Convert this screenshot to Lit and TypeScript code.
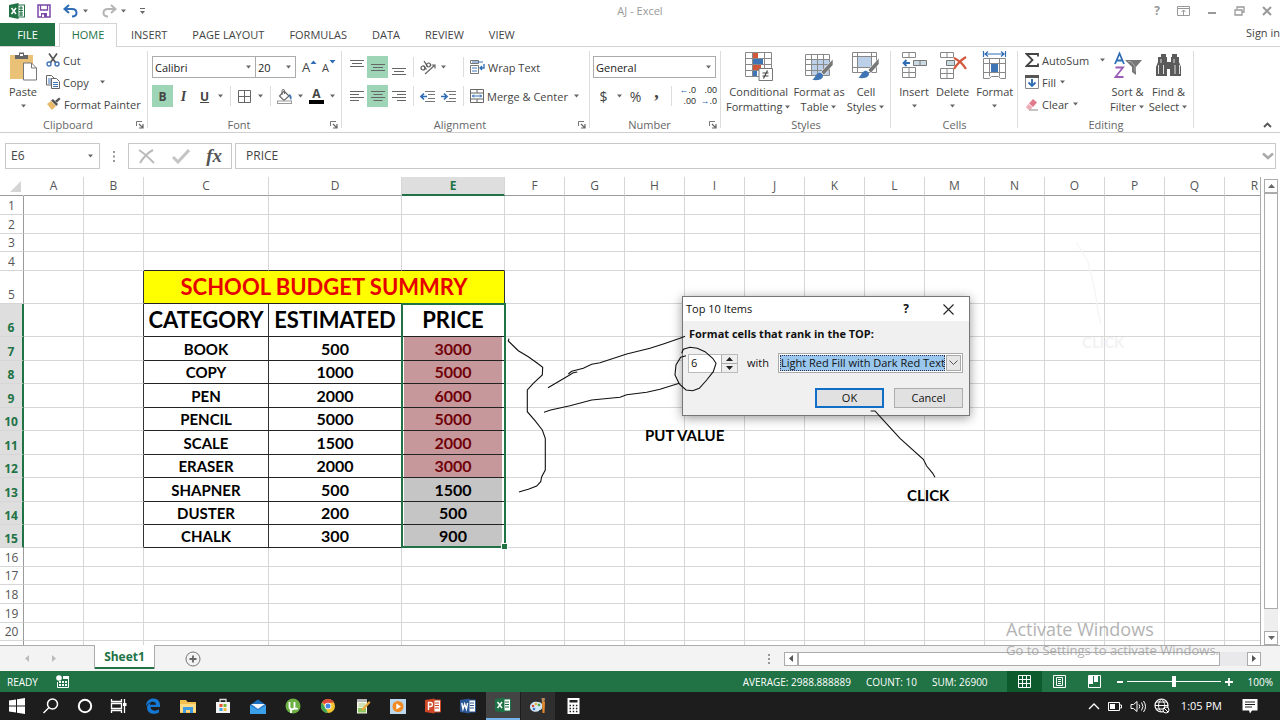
import { LitElement, html, css, nothing, TemplateResult } from "lit";
import { customElement } from "lit/decorators.js";
import { classMap } from "lit/directives/class-map.js";
import { styleMap } from "lit/directives/style-map.js";

const caret = html`<svg class="caret" width="7" height="4" viewBox="0 0 7 4" aria-hidden="true"><path d="M1 0.5h5L3.500 3.500z" fill="#666"/></svg>`;

/* ---------- title bar icons ---------- */
const excelLogo = html`<svg width="16" height="16" viewBox="0 0 16 16"><rect x="8" y="2" width="7.500" height="12" fill="#fff" stroke="#217346"/><path d="M10 5h4M10 7.500h4M10 10h4M10 12h4M12 3v10" stroke="#217346" stroke-width="1"/><path d="M0 2L9.500 0v16L0 14z" fill="#217346"/><path d="M2.500 5l4.500 6M7 5l-4.500 6" stroke="#fff" stroke-width="1.600"/></svg>`;
const saveIcon = html`<svg width="14" height="14" viewBox="0 0 14 14"><path d="M1 1h12v12H1z" fill="#fff" stroke="#7a48a8" stroke-width="1.500"/><path d="M3.500 1v5h7V1" fill="none" stroke="#7a48a8" stroke-width="1.300"/><path d="M4 13V9h6v4" fill="#7a48a8"/><rect x="5" y="10.500" width="2" height="2.500" fill="#fff"/></svg>`;
const undoIcon = html`<svg width="16" height="14" viewBox="0 0 16 14"><path d="M6 1L1.500 5L6 9M2 5h7c6 0 6 7.500 0 7.500" fill="none" stroke="#2f6db5" stroke-width="2"/></svg>`;
const redoIcon = html`<svg width="16" height="14" viewBox="0 0 16 14"><path d="M10 1l4.500 4L10 9M14 5H7c-6 0-6 7.500 0 7.500" fill="none" stroke="#b5b5b5" stroke-width="2"/></svg>`;
const customizeIcon = html`<svg width="7" height="7" viewBox="0 0 7 7"><path d="M1 0.500h5" stroke="#666"/><path d="M1 3h5L3.500 6z" fill="#666"/></svg>`;
const displayIcon = html`<svg width="13" height="10" viewBox="0 0 13 10"><path d="M0.500 0.500h12v9h-12zM0.500 2.500h12" fill="none" stroke="#999"/><path d="M6.500 9V4M4.500 6l2-2 2 2" fill="none" stroke="#999"/></svg>`;
const minIcon = html`<svg width="10" height="10" viewBox="0 0 10 10"><path d="M1 7h8" stroke="#999" stroke-width="2"/></svg>`;
const restoreIcon = html`<svg width="11" height="10" viewBox="0 0 11 10"><path d="M3 3V1h7v5H8M1 4h7v5H1z" fill="none" stroke="#999" stroke-width="1.300"/></svg>`;
const closeIcon = html`<svg width="10" height="10" viewBox="0 0 10 10"><path d="M1 1l8 8M9 1L1 9" stroke="#999" stroke-width="2"/></svg>`;

/* ---------- ribbon icons ---------- */
const pasteIcon = html`<svg width="30" height="30" viewBox="0 0 30 30"><rect x="2" y="4" width="23" height="24" fill="#e9c277"/><path d="M7 8V4h4V1.500h5V4h4v4z" fill="#666"/><rect x="12" y="3" width="3" height="2" fill="#fff"/><path d="M15.500 12h8l5 5v12h-13z" fill="#fff" stroke="#777"/><path d="M23.500 12v5h5" fill="none" stroke="#777"/></svg>`;
const cutIcon = html`<svg width="14" height="14" viewBox="0 0 14 14"><path d="M3 0.500L9.500 9.500M11 0.500L4.500 9.500" stroke="#555" stroke-width="1.700"/><circle cx="3" cy="11" r="2" fill="#fff" stroke="#3f74b5" stroke-width="1.400"/><circle cx="11" cy="11" r="2" fill="#fff" stroke="#3f74b5" stroke-width="1.400"/></svg>`;
const copyIcon = html`<svg width="14" height="14" viewBox="0 0 14 14"><path d="M.500.500h5l2.500 2.500v7h-7.500z" fill="#fff" stroke="#666"/><path d="M2 4h4M2 6h4M2 8h4" stroke="#3f74b5"/><path d="M5.500 3.500h5l3 3v7h-8z" fill="#fff" stroke="#666"/><path d="M7 7.500h5M7 9.500h5M7 11.500h5" stroke="#3f74b5"/></svg>`;
const painterIcon = html`<svg width="15" height="14" viewBox="0 0 15 14"><path d="M1 7l4-3 5 5-4 4z" fill="#e9b96a"/><path d="M5 3.500l2-1.500 5 5-1.500 2z" fill="#555"/><path d="M9 4l4-3.500 1.500 1.500L11 5.500z" fill="#555"/></svg>`;
const growIcon = html`<svg width="7" height="4" viewBox="0 0 7 4"><path d="M0.500 4L3.500 0.500l3 3.500z" fill="#2f6db5"/></svg>`;
const shrinkIcon = html`<svg width="7" height="4" viewBox="0 0 7 4"><path d="M0.500 0L3.500 3.500l3-3.500z" fill="#2f6db5"/></svg>`;
const borderIcon = html`<svg width="13" height="13" viewBox="0 0 13 13"><path d="M.500.500h12v12H.500zM6.500.500v12M.500 6.500h12" fill="none" stroke="#666"/></svg>`;
const fillColorIcon = html`<svg width="16" height="15" viewBox="0 0 16 15"><path d="M7 2l5 5-5 4.500L2.500 7z" fill="#fff" stroke="#666" stroke-width="1.200"/><path d="M5 6V1.500c0-1.500 2.500-1.500 2.500 0V5" fill="none" stroke="#666"/><path d="M12 5c3 1 3 4 2 6-1-1-2-3-2-6z" fill="#3f74b5"/><rect x="0.500" y="12" width="14" height="2.500" fill="#fff" stroke="#999"/></svg>`;
const launcher = html`<svg width="8" height="8" viewBox="0 0 8 8"><path d="M0.500 5V.500H6" fill="none" stroke="#777"/><path d="M3 3l3.500 3.500M7 3v4H3" fill="none" stroke="#666" stroke-width="1.200"/></svg>`;
const lines = (ws: number[], align: string, top: number) => html`<svg width="14" height="15" viewBox="0 0 14 15"><path d=${ws.map((w, i) => `M${align === "l" ? 0 : align === "r" ? 14 - w : (14 - w) / 2} ${top + i * 3 + 0.5}h${w}`).join("")} stroke="#666"/></svg>`;
const orientIcon = html`<svg width="16" height="15" viewBox="0 0 16 15"><path d="M5 14L15 5M11.500 5H15V8.500" fill="none" stroke="#666" stroke-width="1.200"/><g fill="none" stroke="#555" stroke-width="1.200"><circle cx="3" cy="8" r="2"/><path d="M3.500 5.500L6.500 9.500"/><circle cx="8.500" cy="5" r="2"/><path d="M4 1L7.500 6.500"/></g></svg>`;
const outdentIcon = html`<svg width="15" height="11" viewBox="0 0 15 11"><path d="M5 .500h10M8 3.500h7M8 7.500h7M5 10.500h10" stroke="#777"/><path d="M7 5.500H1M4 2.500l-3 3 3 3" fill="none" stroke="#2f6db5" stroke-width="1.700"/></svg>`;
const indentIcon = html`<svg width="15" height="11" viewBox="0 0 15 11"><path d="M5 .500h10M8 3.500h7M8 7.500h7M5 10.500h10" stroke="#777"/><path d="M0 5.500h6M3 2.500l3 3-3 3" fill="none" stroke="#2f6db5" stroke-width="1.700"/></svg>`;
const wrapIcon = html`<svg width="15" height="14" viewBox="0 0 15 14"><path d="M.500.500h8v3h-8zM.500 5.500h8v8h-8z" fill="#fff" stroke="#777"/><path d="M2 2h11M2 8h5M2 11h5" stroke="#3f74b5"/><path d="M14 4v4h-4M12 6l-2 2 2 2" fill="none" stroke="#2f6db5" stroke-width="1.300"/></svg>`;
const mergeIcon = html`<svg width="14" height="14" viewBox="0 0 14 14"><path d="M.500.500h13v13H.500zM.500 4h13M.500 10h13M7 .500V4M7 10v3.500" fill="none" stroke="#666"/><path d="M2 7h10M4 5.500L2.500 7 4 8.500M10 5.500L11.500 7 10 8.500" fill="none" stroke="#2f6db5"/></svg>`;
const condIcon = html`<svg width="30" height="30" viewBox="0 0 30 30"><path d="M1.500 1.500h26v24h-26z" fill="#fff"/><path d="M9 2h5v5H9zM9 14h8v5H9z" fill="#d2573a"/><path d="M9 8h10v5H9zM9 19h4v6H9z" fill="#3f74b5"/><path d="M1.500 1.500h26v24h-26zM1.500 7.500h26M1.500 13.500h26M1.500 19.500h26M8.500 1.500v24M20.500 1.500v24" fill="none" stroke="#888"/><path d="M15 17.500h13.500v12H15z" fill="#fff" stroke="#777"/><path d="M18.500 22h6M18.500 25h6M23.500 19.500l-4 8" stroke="#444" stroke-width="1.200"/></svg>`;
const tableIcon = html`<svg width="30" height="30" viewBox="0 0 30 30"><path d="M1.500 3.500h24v21h-24z" fill="#fff"/><path d="M8 9h17v15H8z" fill="#bdd0ea"/><path d="M1.500 3.500h24v21h-24zM1.500 8.500h24M1.500 13.500h24M1.500 19.500h24M7.500 3.500v21M13.500 3.500v21M19.500 3.500v21" fill="none" stroke="#888"/><path d="M29 8v6l-9 10-3-3z" fill="#777" stroke="#fff" stroke-width=".6"/><path d="M8 28.500c3-.5 3-5 6.500-6.500 2-.7 4.500 1 4.500 3 0 4-7 5-11 3.500z" fill="#3f74b5"/></svg>`;
const cellIcon = html`<svg width="30" height="30" viewBox="0 0 30 30"><path d="M1.500 1.500h24v20h-24z" fill="#fff"/><path d="M7 6h13v10H7z" fill="#bdd0ea"/><path d="M1.500 1.500h24v20h-24zM1.500 5.500h24M1.500 16.500h24M6.500 1.500v20M20.500 1.500v20" fill="none" stroke="#888"/><path d="M28 7v6l-8 9-3-3z" fill="#777" stroke="#fff" stroke-width=".6"/><path d="M7 26.500c3-.5 3-5 6.500-6.500 2-.7 4.500 1 4.500 3 0 4-7 5-11 3.500z" fill="#3f74b5"/></svg>`;
const insertIcon = html`<svg width="30" height="30" viewBox="0 0 30 30"><path d="M3.500 1.500h13v5h-13zM10 1.500v5M3.500 16.500h13v10h-13zM10 16.500v10M3.500 21.500h13" fill="#fff" stroke="#888"/><path d="M14.500 9.500h13v5h-13zM21 9.500v5" fill="#c7dbe0" stroke="#777"/><path d="M11 12H4.500M7.500 9L4.500 12l3 3" fill="none" stroke="#2f6db5" stroke-width="1.800"/></svg>`;
const deleteIcon = html`<svg width="30" height="30" viewBox="0 0 30 30"><path d="M2.500 1.500h13v5h-13zM9 1.500v5M2.500 17.500h13v10h-13zM9 17.500v10M2.500 22.500h13" fill="#fff" stroke="#888"/><path d="M8.500 9.500h8v5h-8z" fill="#c7dbe0" stroke="#777"/><path d="M16 7c4 2 9 6 12 11M28 6c-5 3-9 7-12 12" fill="none" stroke="#d2573a" stroke-width="2.200"/></svg>`;
const formatIcon = html`<svg width="30" height="30" viewBox="0 0 30 30"><path d="M3.500 7.500h22v20h-5l-2-2h-7l-2 2h-6zM3.500 12.500h22M3.500 21.500h22M9.500 7.500v18M19.500 7.500v18" fill="#fff" stroke="#888"/><rect x="11" y="13" width="7" height="8" fill="#3f74b5"/><path d="M3.500 0v6M25.500 0v6M5 3h19M8 0.500L5 3l3 2.500M21 .500L24 3l-3 2.500" fill="none" stroke="#2f6db5" stroke-width="1.200"/></svg>`;
const sumIcon = html`<svg width="14" height="14" viewBox="0 0 14 14"><path d="M13 3.500V1H1.500L7.500 7l-6 6H13v-2.500" fill="none" stroke="#444" stroke-width="1.800"/></svg>`;
const fillIcon = html`<svg width="14" height="14" viewBox="0 0 14 14"><path d="M.500.500h13v13H.500z" fill="#fff" stroke="#888"/><path d="M0 0h14v3H0z" fill="#555"/><path d="M7 4v7M3.500 7.500L7 11l3.500-3.500" fill="none" stroke="#2f6db5" stroke-width="1.900"/></svg>`;
const clearIcon = html`<svg width="14" height="13" viewBox="0 0 14 13"><path d="M8 1l4 3.500L8 9 4 5.500z" fill="#e27a8d"/><path d="M3.500 6L7.500 9.500l-2 2H3L1 9z" fill="#f0aab6"/><path d="M4 12h9" stroke="#888"/></svg>`;
const sortIcon = html`<svg width="30" height="30" viewBox="0 0 30 30"><path d="M2 13L6.500 2.500 11 13M3.500 9.500h6" fill="none" stroke="#2f6db5" stroke-width="1.800"/><path d="M2.500 16.500h7.500l-7.500 9.500h8" fill="none" stroke="#9a5bb5" stroke-width="1.800"/><path d="M12 9h17l-6 7v8l-4-3v-5z" fill="#777"/><path d="M15 10.500h3l4 5v5" fill="none" stroke="#aaa"/></svg>`;
const findIcon = html`<svg width="30" height="30" viewBox="0 0 30 30"><path d="M7 3h5v3h1v5h4V6h1V3h5v3h2v5l2 5v9H16v-7h-3v7H2v-9l2-5V6h3z" fill="#5a5a5a"/><path d="M4.500 14v9M7 8v4M20 8v4M25.500 14v9M9.500 14v9M21 14v9" stroke="#ddd"/></svg>`;
const collapseIcon = html`<svg width="9" height="6" viewBox="0 0 9 6"><path d="M1 5l3.500-3.500L8 5" fill="none" stroke="#555" stroke-width="1.800"/></svg>`;

/* ---------- task bar icons ---------- */
const startIcon = html`<svg width="18" height="18" viewBox="0 0 18 18"><path d="M1 3.500l7-1v6H1zM9 2.300L17 1v7.500H9zM1 9.500h7v6l-7-1zM9 9.500h8V17l-8-1.300z" fill="#fff"/></svg>`;
const searchIcon = html`<svg width="18" height="18" viewBox="0 0 18 18"><circle cx="10.500" cy="7" r="5" fill="none" stroke="#fff" stroke-width="1.500"/><path d="M7 10.500L1.500 16" stroke="#fff" stroke-width="1.500"/></svg>`;
const cortanaIcon = html`<svg width="16" height="16" viewBox="0 0 16 16"><circle cx="8" cy="8" r="6.200" fill="none" stroke="#fff" stroke-width="2"/></svg>`;
const taskViewIcon = html`<svg width="18" height="16" viewBox="0 0 18 16"><path d="M1.500 1v2.500h10V1M1.500 15v-2.500h10V15M1.500 5.500h10v5h-10zM14.500 1v14" fill="none" stroke="#fff" stroke-width="1.300"/><rect x="13" y="5" width="3.500" height="3" fill="#fff"/></svg>`;
const edgeIcon = html`<svg width="16" height="16" viewBox="0 0 16 16"><path d="M1 8C1 3 4.500.5 8.500.5c4.500 0 6.500 3 6.500 6.500v2H5.500c.3 4 5.500 4.500 8.500 2.500v3C9.500 17 2 16 2 9.500 2 7 4 5 6 4.500c-1 1-1.200 2-1.200 2.300H11c0-4-6-4.300-10 1.200z" fill="#1478d4"/></svg>`;
const explorerIcon = html`<svg width="16" height="15" viewBox="0 0 16 15"><path d="M0 1h6l1.500 2H16v11H0z" fill="#f3c04f"/><path d="M0 5h16v8H0z" fill="#fbdc85"/><path d="M3 8h10v6h-3v-3H6v3H3z" fill="#3f9be0"/></svg>`;
const storeIcon = html`<svg width="16" height="16" viewBox="0 0 16 16"><path d="M5 4V1.500h6V4" fill="none" stroke="#ddd" stroke-width="1.300"/><path d="M1 4h14v11H1z" fill="#f3f3f3"/><path d="M4.500 6h3v3h-3z" fill="#e8502c"/><path d="M8.500 6h3v3h-3z" fill="#7eb63a"/><path d="M4.500 10h3v3h-3z" fill="#3aa3e0"/><path d="M8.500 10h3v3h-3z" fill="#f3b93a"/></svg>`;
const mailIcon = html`<svg width="16" height="15" viewBox="0 0 16 15"><path d="M0 6l8-5.500L16 6v9H0z" fill="#1a6fc0"/><path d="M1 5h14l-7 5z" fill="#f1f6fa"/><path d="M0 6l8 5 8-5v9H0z" fill="#3aa0ea"/></svg>`;
const torrentIcon = html`<svg width="16" height="16" viewBox="0 0 16 16"><circle cx="8" cy="8" r="7.500" fill="#6cb044"/><path d="M4.500 4v5c0 3 4.500 3 5 .5V4M9.500 9.500c.5 2 2.500 1.500 3 .5M6 11v4" fill="none" stroke="#fff" stroke-width="1.800"/></svg>`;
const chromeIcon = html`<svg width="16" height="16" viewBox="0 0 16 16"><circle cx="8" cy="8" r="7" fill="#f5c531"/><path d="M8 8L1.900 4.500A7 7 0 0 1 14.100 4.500L8 5z" fill="#df4a3c"/><path d="M1.900 4.500L5.500 10 8 15A7 7 0 0 1 1.900 4.500z" fill="#3fa557"/><circle cx="8" cy="8" r="3.300" fill="#fff"/><circle cx="8" cy="8" r="2.500" fill="#4a86e0"/></svg>`;
const noteIcon = html`<svg width="16" height="16" viewBox="0 0 16 16"><path d="M2 2.500h10v13H2z" fill="#f4f6e8"/><path d="M2 1h10v3H2z" fill="#b7b7b7"/><path d="M3.500 6h7M3.500 8h7" stroke="#a9c98a"/><path d="M3 10h8v4.500H3z" fill="#8cc663"/><path d="M6 11.500l8-8.500 1.500 1.500L8 13z" fill="#e8a93a"/></svg>`;
const playerIcon = html`<svg width="16" height="15" viewBox="0 0 16 15"><path d="M0 0h16v15H0z" fill="#bcd8ef"/><circle cx="8" cy="7.500" r="5.500" fill="#f08a24"/><path d="M6.300 4.500v6l4.700-3z" fill="#fff"/></svg>`;
const office = (fill: string, glyph: string) => html`<svg width="16" height="16" viewBox="0 0 16 16"><path d="M8 2h7.500v12H8z" fill="#fff" stroke=${fill}/><path d="M10 5h4M10 7.500h4M10 10h4" stroke=${fill}/><path d="M0 2L9.500.500v15L0 14z" fill=${fill}/><path d=${glyph} fill="none" stroke="#fff" stroke-width="1.400"/></svg>`;
const paintIcon = html`<svg width="18" height="16" viewBox="0 0 18 16"><path d="M1 9c0-4 4-6 8-5 4 0 5 3 4 6s-3 1-3 3c-4 2-9 0-9-4z" fill="#cfe6f5"/><circle cx="4" cy="8" r="1.300" fill="#dc4c3c"/><circle cx="7" cy="6" r="1.300" fill="#f0b32f"/><circle cx="10" cy="7" r="1.300" fill="#56a44a"/><circle cx="5" cy="11" r="1.300" fill="#3c74c8"/><path d="M13 4h3l-.5 11h-2z" fill="#e2892c"/><path d="M12.500 0h3.500l-.5 4h-2.500z" fill="#b88a5c"/></svg>`;
const calcIcon = html`<svg width="13" height="16" viewBox="0 0 13 16"><path d="M.500 0h12v16H.500z" fill="#fff"/><path d="M2.500 2h8v2.500h-8z" fill="#222"/><path d="M2.500 7.500h8M2.500 10.500h8M2.500 13.500h8" stroke="#222" stroke-width="1.500" stroke-dasharray="1.500 1.700"/></svg>`;

interface App { name: string; icon: TemplateResult; state?: string; sys?: boolean }
const APPS: App[] = [
  { name: "Start", icon: startIcon, sys: true },
  { name: "Search", icon: searchIcon, sys: true },
  { name: "Cortana", icon: cortanaIcon, sys: true },
  { name: "Task view", icon: taskViewIcon, sys: true },
  { name: "Edge", icon: edgeIcon },
  { name: "Files", icon: explorerIcon },
  { name: "Store", icon: storeIcon },
  { name: "Mail", icon: mailIcon },
  { name: "Torrent", icon: torrentIcon },
  { name: "Chrome", icon: chromeIcon },
  { name: "Notes", icon: noteIcon },
  { name: "Player", icon: playerIcon },
  { name: "PowerPoint", icon: office("#d04727", "M3.500 12V4.500h2c2.500 0 2.500 4 0 4h-2") },
  { name: "Word", icon: office("#2b5797", "M1.800 5l1.200 6 1.700-5 1.700 5 1.200-6") },
  { name: "Excel", icon: office("#1e7145", "M2.500 5l4.500 6M7 5l-4.500 6"), state: "active" },
  { name: "Paint", icon: paintIcon, state: "open" },
  { name: "Calculator", icon: calcIcon },
];

const COLS: [string, number][] = [
  ["A", 60], ["B", 60], ["C", 125], ["D", 133], ["E", 103],
  ..."FGHIJKLMNOPQR".split("").map((c) => [c, 60] as [string, number]),
];
const HEAD_WIDTH = 24;
const TABLE_WIDTH = COLS.reduce((sum, [, w]) => sum + w, HEAD_WIDTH);
const HEIGHTS = [19, 19, 18, 19, 33, 33, 24, 23, 24, 23, 24, 23, 24, 23, 23, 19, 18, 19, 19, 18, 19];
const RECORDS: [string, number, number][] = [
  ["BOOK", 500, 3000], ["COPY", 1000, 5000], ["PEN", 2000, 6000],
  ["PENCIL", 5000, 5000], ["SCALE", 1500, 2000], ["ERASER", 2000, 3000],
  ["SHAPNER", 500, 1500], ["DUSTER", 200, 500], ["CHALK", 300, 900],
];
const TOP_COUNT = 6;

@customElement("sheet-grid")
class SheetGrid extends LitElement {
  static styles = css`
    :host { display: block; }
    table { table-layout: fixed; border-collapse: separate; border-spacing: 0; }
    th, td { box-sizing: border-box; padding: 0; border: 0 solid #d6d6d6; border-width: 0 1px 1px 0; overflow: hidden; white-space: nowrap; text-align: center; line-height: 16px; }
    th { font: 12px/16px "Open Sans", "Noto Sans", sans-serif; color: #555; }
    thead th { height: 19px; border-bottom-color: #9b9b9b; }
    thead th.picked { background: #dedede; color: #217346; font-weight: 700; border-bottom: 2px solid #217346; }
    .corner { vertical-align: bottom; border-right-color: transparent; }
    .corner svg { display: block; margin: 0 2px 3px 10px; }
    tbody th { border-right-color: #9b9b9b; vertical-align: bottom; }
    tbody th.picked { background: #dedede; color: #217346; font-weight: 700; border-right: 2px solid #217346; }
    td { font: 700 16px/20px Lato, "Open Sans", sans-serif; color: #000; vertical-align: middle; }
    .right { border-right-color: #333; }
    .below { border-bottom-color: #222; }
    .name { font-size: 15px; }
    .title { background: #ff0; color: #e60000; font-size: 22px; line-height: 30px; }
    .head { font-size: 22px; line-height: 30px; }
    .price { background: #c5c5c5; box-shadow: inset 2px 0 #fff, inset -2px 0 #fff; }
    .price.top { background: #c6989c; color: #700008; }
  `;

  private cell(row: number, col: number) {
    if (row === 5 && col === 2) return html`<td class="title right below" colspan="3">SCHOOL BUDGET SUMMRY</td>`;
    if (row === 5 && (col === 3 || col === 4)) return nothing;
    const inside = col >= 2 && col <= 4;
    const classes = {
      right: row >= 5 && row <= 15 && col >= 1 && col <= 4,
      below: inside && row >= 4 && row <= 15,
      head: inside && row === 6,
      name: col === 2 && row > 6,
      price: col === 4 && row > 6 && row <= 15,
      top: col === 4 && row > 6 && row <= 6 + TOP_COUNT,
    };
    let text: string | number | typeof nothing = nothing;
    if (inside && row === 6) text = ["CATEGORY", "ESTIMATED", "PRICE"][col - 2];
    if (inside && row > 6 && row <= 15) text = RECORDS[row - 7][col - 2];
    return html`<td class=${classMap(classes)}>${text}</td>`;
  }

  render() {
    return html`<table style=${styleMap({ width: TABLE_WIDTH + "px" })}>
      <colgroup><col style=${styleMap({ width: HEAD_WIDTH + "px" })}>${COLS.map(([, w]) => html`<col style=${styleMap({ width: w + "px" })}>`)}</colgroup>
      <thead><tr>
        <th class="corner"><svg width="11" height="11" viewBox="0 0 11 11"><path d="M11 0v11H0z" fill="#d5d5d5"/></svg></th>
        ${COLS.map(([name]) => html`<th scope="col" class=${classMap({ picked: name === "E" })}>${name}</th>`)}
      </tr></thead>
      <tbody>${HEIGHTS.map((h, i) => html`<tr style=${styleMap({ height: h + "px" })}>
        <th scope="row" class=${classMap({ picked: i >= 5 && i <= 14 })}>${i < 20 ? i + 1 : nothing}</th>
        ${COLS.map((_, c) => this.cell(i + 1, c))}
      </tr>`)}</tbody>
    </table>`;
  }
}

@customElement("top-dialog")
class TopDialog extends LitElement {
  static styles = css`
    :host { display: block; box-sizing: border-box; width: 288px; background: #f0f0f0; border: 1px solid #777; box-shadow: 0 2px 10px rgba(0,0,0,.4); font: 11px/16px "Open Sans", "Noto Sans", sans-serif; color: #111; }
    button, input, select { font: inherit; color: inherit; margin: 0; padding: 0; border-radius: 0; box-sizing: border-box; }
    header { display: flex; align-items: center; background: #fff; height: 24px; padding-left: 3px; }
    header span { flex: 1; }
    header button { border: 0; background: none; width: 42px; height: 24px; display: grid; place-items: center; font-weight: 700; font-size: 12px; }
    .body { padding: 5px 6px 7px 5px; }
    .prompt { display: block; font-weight: 700; padding: 0 0 11px 1px; }
    .row { display: flex; align-items: center; height: 20px; }
    .spin { display: flex; flex: none; width: 50px; height: 19px; border: 1px solid #bbb; box-sizing: border-box; background: #fff; }
    .spin input { flex: 1; min-width: 0; border: 0; padding-left: 2px; background: none; }
    .arrows { display: grid; width: 15px; background: #eee; border-left: 1px solid #aaa; }
    .arrows button { border: 0; background: none; display: grid; place-items: center; }
    .arrows button + button { border-top: 1px solid #aaa; }
    .with { flex: none; width: 40px; text-align: center; }
    .pick { flex: 1; min-width: 0; position: relative; display: flex; height: 20px; box-sizing: border-box; border: 1px solid #aaa; padding: 1px; background: #fff; }
    .pick select { appearance: none; flex: 1; min-width: 0; border: 1px dotted #335; background: #99c7ee; margin-right: 16px; line-height: 14px; }
    .pick i { position: absolute; right: 1px; top: 1px; bottom: 1px; width: 15px; display: grid; place-items: center; background: #e6e6e6; border: 1px solid #aaa; box-sizing: border-box; pointer-events: none; }
    .actions { display: flex; justify-content: flex-end; gap: 10px; padding-top: 15px; }
    .actions button { width: 69px; height: 20px; background: #e1e1e1; border: 1px solid #adadad; line-height: 16px; }
    .actions .default { border: 2px solid #0f6fc6; }
  `;
  render() {
    return html`
      <header><span>Top 10 Items</span><button>?</button><button aria-label="Close"><svg width="11" height="11" viewBox="0 0 11 11"><path d="M.500.500l10 10M10.500.500l-10 10" stroke="#222" stroke-width="1.100"/></svg></button></header>
      <div class="body">
        <label class="prompt" for="rank">Format cells that rank in the TOP:</label>
        <div class="row">
          <div class="spin"><input id="rank" .value=${String(TOP_COUNT)}>
            <div class="arrows">
              <button aria-label="More"><svg width="7" height="4" viewBox="0 0 7 4"><path d="M0 4L3.500 0 7 4z" fill="#222"/></svg></button>
              <button aria-label="Less"><svg width="7" height="4" viewBox="0 0 7 4"><path d="M0 0L3.500 4 7 0z" fill="#222"/></svg></button>
            </div>
          </div>
          <label class="with" for="style">with</label>
          <div class="pick"><select id="style"><option>Light Red Fill with Dark Red Text</option></select><i><svg width="9" height="6" viewBox="0 0 9 6"><path d="M.500.500l4 4 4-4" fill="none" stroke="#555"/></svg></i></div>
        </div>
        <div class="actions"><button class="default">OK</button><button>Cancel</button></div>
      </div>`;
  }
}

@customElement("excel-ribbon")
class ExcelRibbon extends LitElement {
  static styles = css`
    :host { display: flex; height: 86px; box-sizing: border-box; border-bottom: 1px solid #cfcfcf; font: 11px/15px "Open Sans", "Noto Sans", sans-serif; color: #444; background: #fff; }
    button, select { font: inherit; color: inherit; margin: 0; padding: 0; border: 0; background: none; border-radius: 0; box-sizing: border-box; }
    svg { flex: none; display: block; }
    .group { display: flex; flex-direction: column; flex: none; position: relative; box-sizing: border-box; padding: 2px 0 0; }
    .group::after { content: ""; position: absolute; right: 0; top: 4px; bottom: 4px; width: 1px; background: #dcdcdc; }
    .clipboard { width: 148px; }
    .font { width: 194px; }
    .alignment { width: 248px; }
    .number { width: 131px; }
    .styles { width: 170px; }
    .cells { width: 127px; }
    .editing { width: 176px; }
    .body { display: flex; height: 68px; }
    .caption { display: flex; align-items: center; height: 15px; color: #666; padding: 0 4px 0 0; }
    .caption span { flex: 1; text-align: center; }
    .caption.plain { padding: 0; }
    .clipboard .body { padding-left: 8px; gap: 8px; }
    .big { display: flex; flex-direction: column; align-items: center; padding-top: 2px; text-align: center; white-space: nowrap; line-height: 15px; }
    .big svg:first-child { margin-bottom: 3px; }
    .big .caret { margin-top: 5px; }
    .big .line { display: flex; align-items: center; gap: 2px; }
    .big .line .caret { margin: 0; }
    .stack { display: flex; flex-direction: column; }
    .small { display: flex; align-items: center; gap: 3px; height: 22px; white-space: nowrap; }
    .small .far { margin-left: 7px; display: block; }
    .rows { display: flex; flex-direction: column; gap: 7px; padding-top: 7px; flex: 1; box-sizing: border-box; }
    .rows > div { display: flex; align-items: center; height: 22px; }
    .combo { position: relative; display: flex; align-items: center; height: 22px; box-sizing: border-box; border: 1px solid #ababab; }
    .combo + .combo { border-left: 0; }
    .combo select { appearance: none; width: 100%; height: 20px; padding: 0 2px; color: #222; }
    .combo .caret { position: absolute; right: 3px; top: 8px; }
    .w-font { width: 104px; }
    .w-size { width: 40px; }
    .w-number { width: 123px; }
    .tool { width: 21px; height: 22px; display: grid; place-items: center; flex: none; }
    .on { background: #9fd5b7; }
    .drop { width: 11px; height: 22px; display: grid; place-items: center; flex: none; }
    .bar { width: 1px; height: 20px; margin: 0 3px 0 4px; background: #dcdcdc; flex: none; }
    .gap { width: 10px; flex: none; }
    .b { font-weight: 700; font-size: 12px; }
    .i { font-family: "Liberation Serif", serif; font-style: italic; font-weight: 700; font-size: 14px; }
    .u { font-weight: 700; text-decoration: underline; font-size: 12px; }
    .comma { font: 700 18px/12px "Liberation Serif", serif; padding-bottom: 8px; }
    .font .body, .alignment .body { padding-left: 4px; }
    .number .body { padding-left: 3px; }
    .sizer { display: flex; align-items: flex-start; width: 20px; font-size: 13px; }
    .sizer.less { font-size: 11px; }
    .sizers { display: flex; padding-left: 6px; }
    .ink { display: flex; flex-direction: column; align-items: center; width: 15px; font-weight: 700; font-size: 12px; line-height: 12px; border-bottom: 4px solid #000; }
    .label { display: flex; align-items: center; gap: 3px; height: 22px; padding: 0 3px; white-space: nowrap; }
    .sym { font-size: 14px; }
    .dec { display: grid; font: 9px/11px "Liberation Sans", sans-serif; text-align: right; width: 21px; color: #333; }
    .dec em { font-style: normal; color: #2f6db5; }
    .styles .body { padding-left: 5px; gap: 2px; }
    .cells .body { padding-left: 8px; gap: 7px; }
    .editing .body { padding-left: 7px; }
    .editing .stack { width: 82px; }
    .editing .big { width: 41px; }
    .end { flex: 1; display: flex; justify-content: flex-end; align-items: flex-end; padding: 0 8px 4px; }
  `;
  private drop = html`<button class="drop" aria-label="More">${caret}</button>`;
  private caption(name: string, launch = true) {
    return html`<div class="caption ${launch ? "" : "plain"}"><span>${name}</span>${launch ? html`<button aria-label="${name} settings">${launcher}</button>` : nothing}</div>`;
  }
  private big(icon: TemplateResult, a: string, b?: string) {
    return html`<button class="big">${icon}<span>${a}</span>${b ? html`<span class="line">${b} ${caret}</span>` : caret}</button>`;
  }
  private combo(name: string, value: string, cls: string) {
    return html`<div class="combo ${cls}"><select aria-label=${name}><option>${value}</option></select>${caret}</div>`;
  }
  render() {
    return html`
      <section class="group clipboard"><div class="body">
        ${this.big(pasteIcon, "Paste")}
        <div class="stack">
          <button class="small">${cutIcon}Cut</button>
          <button class="small">${copyIcon}Copy <span class="far">${caret}</span></button>
          <button class="small">${painterIcon}Format Painter</button>
        </div></div>${this.caption("Clipboard")}</section>

      <section class="group font"><div class="body"><div class="rows">
        <div>${this.combo("Font", "Calibri", "w-font")}${this.combo("Font size", "20", "w-size")}
          <span class="sizers"><button class="sizer">A${growIcon}</button><button class="sizer less">A${shrinkIcon}</button></span></div>
        <div><button class="tool on b">B</button><button class="tool i">I</button><button class="tool u">U</button>${this.drop}<span class="bar"></span>
          <button class="tool">${borderIcon}</button>${this.drop}<span class="bar"></span>
          <button class="tool">${fillColorIcon}</button>${this.drop}<button class="tool"><span class="ink">A</span></button>${this.drop}</div>
      </div></div>${this.caption("Font")}</section>

      <section class="group alignment"><div class="body"><div class="rows">
        <div><button class="tool">${lines([14, 10, 14], "c", 0)}</button><button class="tool on">${lines([14, 10, 14], "c", 4)}</button><button class="tool">${lines([14, 10, 14], "c", 8)}</button>
          <span class="bar"></span><button class="tool">${orientIcon}</button>${this.drop}<span class="gap"></span><span class="bar"></span>
          <button class="label">${wrapIcon}Wrap Text</button></div>
        <div><button class="tool">${lines([14, 9, 14, 9], "l", 2)}</button><button class="tool on">${lines([14, 9, 14, 9], "c", 2)}</button><button class="tool">${lines([14, 9, 14, 9], "r", 2)}</button>
          <span class="bar"></span><button class="tool">${outdentIcon}</button><button class="tool">${indentIcon}</button><span class="bar"></span>
          <button class="label">${mergeIcon}Merge &amp; Center</button>${this.drop}</div>
      </div></div>${this.caption("Alignment")}</section>

      <section class="group number"><div class="body"><div class="rows">
        <div>${this.combo("Number format", "General", "w-number")}</div>
        <div><button class="tool sym">$</button>${this.drop}<button class="tool sym">%</button><button class="tool comma">,</button><span class="bar"></span>
          <button class="dec"><span><em>←</em>.0</span><span>.00</span></button><button class="dec"><span>.00</span><span><em>→</em>.0</span></button></div>
      </div></div>${this.caption("Number")}</section>

      <section class="group styles"><div class="body">
        ${this.big(condIcon, "Conditional", "Formatting")}${this.big(tableIcon, "Format as", "Table")}${this.big(cellIcon, "Cell", "Styles")}
      </div>${this.caption("Styles", false)}</section>

      <section class="group cells"><div class="body">
        ${this.big(insertIcon, "Insert")}${this.big(deleteIcon, "Delete")}${this.big(formatIcon, "Format")}
      </div>${this.caption("Cells", false)}</section>

      <section class="group editing"><div class="body">
        <div class="stack">
          <button class="small">${sumIcon}AutoSum <span class="far">${caret}</span></button>
          <button class="small">${fillIcon}Fill ${caret}</button>
          <button class="small">${clearIcon}Clear ${caret}</button>
        </div>
        ${this.big(sortIcon, "Sort &", "Filter")}${this.big(findIcon, "Find &", "Select")}
      </div>${this.caption("Editing", false)}</section>
      <div class="end"><button aria-label="Collapse ribbon">${collapseIcon}</button></div>`;
  }
}

@customElement("app-root")
class AppRoot extends LitElement {
  static styles = css`
    :host { display: flex; flex-direction: column; height: 100vh; overflow: hidden; position: relative; background: #fff; font: 11px/16px "Open Sans", "Noto Sans", sans-serif; color: #444; }
    button, input { font: inherit; color: inherit; margin: 0; padding: 0; border: 0; background: none; border-radius: 0; box-sizing: border-box; }
    svg { display: block; flex: none; }
    .titlebar { display: grid; grid-template-columns: 1fr auto 1fr; align-items: center; height: 22px; padding-bottom: 1px; color: #999; }
    .quick, .window { display: flex; align-items: center; }
    .quick { padding-left: 9px; gap: 12px; }
    .quick .pair { display: flex; align-items: center; gap: 3px; }
    .window { justify-content: flex-end; padding-right: 8px; gap: 17px; font-weight: 700; font-size: 12px; }
    .tabs { display: flex; height: 24px; box-sizing: border-box; border-bottom: 1px solid #d4d4d4; }
    .tabs button { height: 24px; padding: 0 12px 0 13px; }
    .tabs .file { background: #217346; color: #fff; width: 55px; padding: 0; margin-right: 4px; height: 23px; }
    .tabs .current { width: 58px; padding: 0 0 2px; border: 1px solid #d4d4d4; border-bottom: 0; background: #fff; color: #217346; margin-right: 1px; }
    .tabs .sign { margin-left: auto; padding: 0; height: 20px; }
    .formula { display: flex; padding: 10px 4px 8px 5px; height: 26px; font-size: 12px; }
    .formula > * { box-sizing: border-box; }
    .namebox { display: flex; align-items: center; width: 95px; border: 1px solid #c9c9c9; padding: 0 5px; }
    .namebox input { flex: 1; min-width: 0; }
    .dots { width: 28px; display: grid; place-items: center; }
    .fx { display: flex; justify-content: space-between; align-items: center; width: 104px; border: 1px solid #c9c9c9; padding: 0 9px; margin-right: 3px; }
    .fx .f { font: italic 700 19px/22px "Liberation Serif", serif; color: #555; }
    .entry { flex: 1; display: flex; align-items: center; border: 1px solid #c9c9c9; padding: 0 1px 0 10px; }
    .entry input { flex: 1; }
    .work { flex: 1; min-height: 0; display: flex; position: relative; }
    .view { flex: 1; min-width: 0; overflow: hidden; position: relative; border-right: 1px solid #ababab; }
    .vscroll { width: 19px; padding: 2px 2px 0 3px; display: flex; flex-direction: column; box-sizing: border-box; }
    .arrow { border: 1px solid #ababab; width: 14px; height: 14px; display: grid; place-items: center; background: #fff; flex: none; }
    .vtrack { flex: 1; background: #eee; }
    .vthumb { height: 95%; background: #fff; border: 1px solid #ababab; box-sizing: border-box; }
    .selection { position: absolute; left: 401px; top: 126px; width: 105px; height: 245px; box-sizing: border-box; border: 2px solid #217346; }
    .handle { position: absolute; left: 502px; top: 367px; width: 5px; height: 5px; background: #217346; outline: 1px solid #fff; }
    top-dialog { position: absolute; left: 682px; top: 119px; }
    .ink { position: absolute; left: 0; top: 0; pointer-events: none; }
    .note { position: absolute; font: 700 15px/20px Lato, "Open Sans", sans-serif; color: #000; }
    .put { left: 645px; top: 248px; }
    .click { left: 907px; top: 308px; }
    .ghost { left: 1082px; top: 155px; color: #f3f3f3; }
    .sheets { display: flex; height: 26px; box-sizing: border-box; background: #f3f3f3; border-top: 1px solid #ababab; }
    .nav { width: 94px; display: flex; align-items: center; gap: 22px; padding-left: 25px; box-sizing: border-box; }
    .sheet { width: 61px; height: 24px; margin-top: -1px; background: #fff; border: 1px solid #ababab; border-width: 0 1px; box-shadow: inset 0 -2px #217346; color: #217346; font-weight: 700; font-size: 12px; }
    .add { margin-left: 30px; }
    .hscroll { margin-left: auto; display: flex; align-items: center; width: 40%; padding-right: 19px; box-sizing: border-box; gap: 14px; }
    .hbar { flex: 1; display: flex; }
    .htrack { flex: 1; background: #e9e9ec; }
    .hthumb { width: 94%; height: 14px; background: #fff; border: 1px solid #ababab; box-sizing: border-box; }
    .status { display: flex; align-items: center; height: 21px; background: #217346; color: #fff; font-size: 10px; padding: 0 7px; }
    .ready { margin-right: 18px; }
    .stats { margin-left: auto; display: flex; gap: 15px; margin-right: 19px; }
    .mode { width: 35px; height: 21px; display: grid; place-items: center; }
    .mode.on { background: #0d5a2c; }
    .zoom { display: flex; align-items: center; gap: 4px; margin: 0 15px 0 5px; }
    .zoom input { appearance: none; width: 94px; height: 12px; background: linear-gradient(#fff, #fff) center / 100% 1px no-repeat; }
    .zoom input::-webkit-slider-thumb { appearance: none; width: 4px; height: 11px; background: #fff; }
    .taskbar { display: flex; height: 28px; background: #1d1d1d; color: #fff; }
    .app { width: 34px; margin-right: 1px; display: grid; place-items: center; box-sizing: border-box; }
    .app.sys { margin-right: 0; }
    .app.active { background: #444; border-bottom: 2px solid #76b3ea; }
    .app.open { background: #2f2f2f; }
    .tray { margin-left: auto; display: flex; align-items: center; gap: 8px; padding-right: 22px; }
    .clock { padding: 0 12px 0 3px; }
    .activate { position: absolute; left: 1006px; bottom: 61px; color: #9a9a9a; opacity: .75; pointer-events: none; }
    .activate p { margin: 0; font-size: 13px; line-height: 18px; }
    .activate .big { font-size: 18px; line-height: 24px; }
  `;

  render() {
    return html`
      <div class="titlebar">
        <div class="quick">${excelLogo}<button aria-label="Save">${saveIcon}</button>
          <span class="pair"><button aria-label="Undo">${undoIcon}</button>${caret}</span>
          <span class="pair"><button aria-label="Redo">${redoIcon}</button>${caret}</span>${customizeIcon}</div>
        <span>AJ - Excel</span>
        <div class="window"><button>?</button><button aria-label="Ribbon display">${displayIcon}</button><button aria-label="Minimize">${minIcon}</button><button aria-label="Restore">${restoreIcon}</button><button aria-label="Close">${closeIcon}</button></div>
      </div>
      <nav class="tabs"><button class="file">FILE</button><button class="current">HOME</button>
        ${["INSERT", "PAGE LAYOUT", "FORMULAS", "DATA", "REVIEW", "VIEW"].map((t) => html`<button>${t}</button>`)}
        <button class="sign">Sign in</button></nav>
      <excel-ribbon></excel-ribbon>

      <div class="formula">
        <div class="namebox"><input aria-label="Name box" .value=${"E6"}>${caret}</div>
        <div class="dots"><svg width="2" height="11" viewBox="0 0 2 11"><path d="M1 0v11" stroke="#999" stroke-width="2" stroke-dasharray="2 2.500"/></svg></div>
        <div class="fx">
          <button aria-label="Cancel"><svg width="17" height="15" viewBox="0 0 17 15"><path d="M1 1c5 3 10 8 15 13M15 1C9 4 5 9 2 14" fill="none" stroke="#bbb" stroke-width="2"/></svg></button>
          <button aria-label="Enter"><svg width="18" height="15" viewBox="0 0 18 15"><path d="M1 8l5 5L17 1" fill="none" stroke="#c4c4c4" stroke-width="3"/></svg></button>
          <button class="f">fx</button></div>
        <div class="entry"><input aria-label="Formula" .value=${"PRICE"}><svg width="12" height="8" viewBox="0 0 12 8"><path d="M1 1.500l5 4.500 5-4.500" fill="none" stroke="#aaa" stroke-width="2.500"/></svg></div>
      </div>

      <main class="work">
        <div class="view">
          <sheet-grid></sheet-grid>
          <div class="selection"></div><div class="handle"></div>
          <span class="note put">PUT VALUE</span><span class="note click">CLICK</span><span class="note ghost">CLICK</span>
          <top-dialog></top-dialog>
          <svg class="ink" width="1260" height="468" viewBox="0 177 1260 468" fill="none" stroke="#111" stroke-width="1.100">
            <path d="M509 338.700L508.300 341 518.300 350.700 528.300 356.700 536.700 362.700 542.700 367.300 542.300 375 533.300 383.300 527.300 390V411.700L535 420.700 542.300 430 545.300 438.300V470L541.700 476.700 540.700 481.700 536.700 486 528.300 489.300 523 490.700 519 492"/>
            <path d="M548 387.700L566.700 376.700 573.300 372.700 577.300 372M568.300 374L571.700 371.300 583.300 368.300 591.700 364.300 600 362.700 626.700 354 650 348.300 663.300 344 680 338.300 685 336.300"/>
            <path d="M544 412.300L550.700 410 570 405.700 591.700 400 620 397.300 626.700 394.700 646.700 392.300 660 389.300 679.300 383.300"/>
            <path d="M686 355.700L680.700 357.300 676 365 675 375 679.300 384 686 390 692.700 390.700 699.300 388.300 706.700 380 713.300 371.700 716 363.300 712.700 358.300 705 351.700 697.300 348.300 690 347.300 683.300 349.300 681.700 353.300"/>
            <path d="M870.700 411H875L881.700 418.300 900 438.300 923.300 459.300 926.700 466 932.700 473.300 935 477.300"/>
            <path d="M1076 242L1088 262 1095 290 1098 312 1101 324" stroke="#f4f4f4"/>
          </svg>
        </div>
        <div class="vscroll"><button class="arrow" aria-label="Up"><svg width="7" height="4" viewBox="0 0 7 4"><path d="M0 4L3.500 0 7 4z" fill="#666"/></svg></button><div class="vtrack"><div class="vthumb"></div></div><button class="arrow" aria-label="Down"><svg width="7" height="4" viewBox="0 0 7 4"><path d="M0 0L3.500 4 7 0z" fill="#666"/></svg></button></div>
      </main>

      <div class="sheets">
        <div class="nav"><svg width="5" height="7" viewBox="0 0 5 7"><path d="M4 0v7L0 3.500z" fill="#bbb"/></svg><svg width="5" height="7" viewBox="0 0 5 7"><path d="M0 0v7l4-3.500z" fill="#bbb"/></svg></div>
        <button class="sheet">Sheet1</button>
        <button class="add" aria-label="New sheet"><svg width="16" height="16" viewBox="0 0 16 16"><circle cx="8" cy="8" r="7" fill="none" stroke="#777"/><path d="M8 4.500v7M4.500 8h7" stroke="#666" stroke-width="1.800"/></svg></button>
        <div class="hscroll"><svg width="2" height="10" viewBox="0 0 2 10"><path d="M1 0v10" stroke="#999" stroke-width="2" stroke-dasharray="2 2"/></svg>
          <div class="hbar"><button class="arrow" aria-label="Left"><svg width="4" height="7" viewBox="0 0 4 7"><path d="M4 0v7L0 3.500z" fill="#555"/></svg></button><div class="htrack"><div class="hthumb"></div></div><button class="arrow" aria-label="Right"><svg width="4" height="7" viewBox="0 0 4 7"><path d="M0 0v7l4-3.500z" fill="#555"/></svg></button></div></div>
      </div>

      <footer class="status">
        <span class="ready">READY</span><svg width="13" height="13" viewBox="0 0 13 13"><circle cx="3" cy="3" r="2.800" fill="#fff"/><path d="M7 1.500h5.500v11h-11V7" fill="none" stroke="#fff"/><path d="M7 1h6v3H7z" fill="#fff"/><path d="M3 7h2M6 7h2M9 7h2M3 10h2M6 10h2M9 10h2" stroke="#fff" stroke-width="2"/></svg>
        <div class="stats"><span>AVERAGE: 2988.888889</span><span>COUNT: 10</span><span>SUM: 26900</span></div>
        <button class="mode on" aria-label="Normal"><svg width="13" height="13" viewBox="0 0 13 13"><path d="M.500.500h12v12H.500zM4.500.500v12M8.500.500v12M.500 4.500h12M.500 8.500h12" fill="none" stroke="#fff"/></svg></button>
        <button class="mode" aria-label="Page layout"><svg width="13" height="13" viewBox="0 0 13 13"><path d="M.500.500h12v12H.500zM3.500 2.500h6v8h-6zM5 4.500h3M5 6.500h3M5 8.500h3" fill="none" stroke="#fff"/></svg></button>
        <button class="mode" aria-label="Page break"><svg width="13" height="13" viewBox="0 0 13 13"><path d="M.500.500h12v12H.500z" fill="none" stroke="#fff"/><path d="M1 1h4v8H1zM6 1h4v6H6z" fill="#fff"/></svg></button>
        <div class="zoom"><svg width="6" height="8" viewBox="0 0 6 8"><path d="M0 4h6" stroke="#fff" stroke-width="2"/></svg><input type="range" aria-label="Zoom" min="0" max="100" .value=${"50"}><svg width="8" height="8" viewBox="0 0 8 8"><path d="M0 4h8M4 0v8" stroke="#fff" stroke-width="1.800"/></svg></div>
        <span>100%</span>
      </footer>

      <div class="taskbar">
        ${APPS.map((a) => html`<button aria-label=${a.name} class=${classMap({ app: true, sys: !!a.sys, active: a.state === "active", open: a.state === "open" })}>${a.icon}</button>`)}
        <div class="tray">
          <svg width="12" height="7" viewBox="0 0 12 7"><path d="M1 6l5-5 5 5" fill="none" stroke="#fff" stroke-width="1.300"/></svg>
          <svg width="14" height="9" viewBox="0 0 14 9"><path d="M.500.500h11v8H.500zM12 3h1.500v3H12" fill="none" stroke="#fff"/><path d="M2 2h5v5H2z" fill="#fff"/></svg>
          <svg width="16" height="13" viewBox="0 0 16 13"><path d="M1 4.500h2.500L7 1.500v10L3.500 8.500H1zM9 4.500q1.500 2 0 4M11.500 2.500q3 4 0 8M13.500 1q4 5.500 0 11" fill="none" stroke="#fff"/></svg>
          <svg width="16" height="16" viewBox="0 0 16 16"><circle cx="7.500" cy="7.500" r="6.500" fill="none" stroke="#fff" stroke-width="1.200"/><path d="M1 7.500h13M2 4h11M2 11h8M7.500 1c-4 4-4 9 0 13M7.500 1c3 3 3.500 6 3 8" fill="none" stroke="#fff"/><circle cx="12" cy="12" r="3" fill="#1d1d1d" stroke="#fff"/><path d="M10 10l4 4" stroke="#fff"/></svg>
          <span class="clock">1:05 PM</span>
          <svg width="16" height="16" viewBox="0 0 16 16"><path d="M.500 1h15v11.500H10L8 15.500 7 12.500H.500z" fill="#fff"/><path d="M3 4h10M3 6.500h10M3 9h7" stroke="#1d1d1d" stroke-width="1.200"/></svg>
        </div>
      </div>
      <div class="activate"><p class="big">Activate Windows</p><p>Go to Settings to activate Windows.</p></div>`;
  }
}
